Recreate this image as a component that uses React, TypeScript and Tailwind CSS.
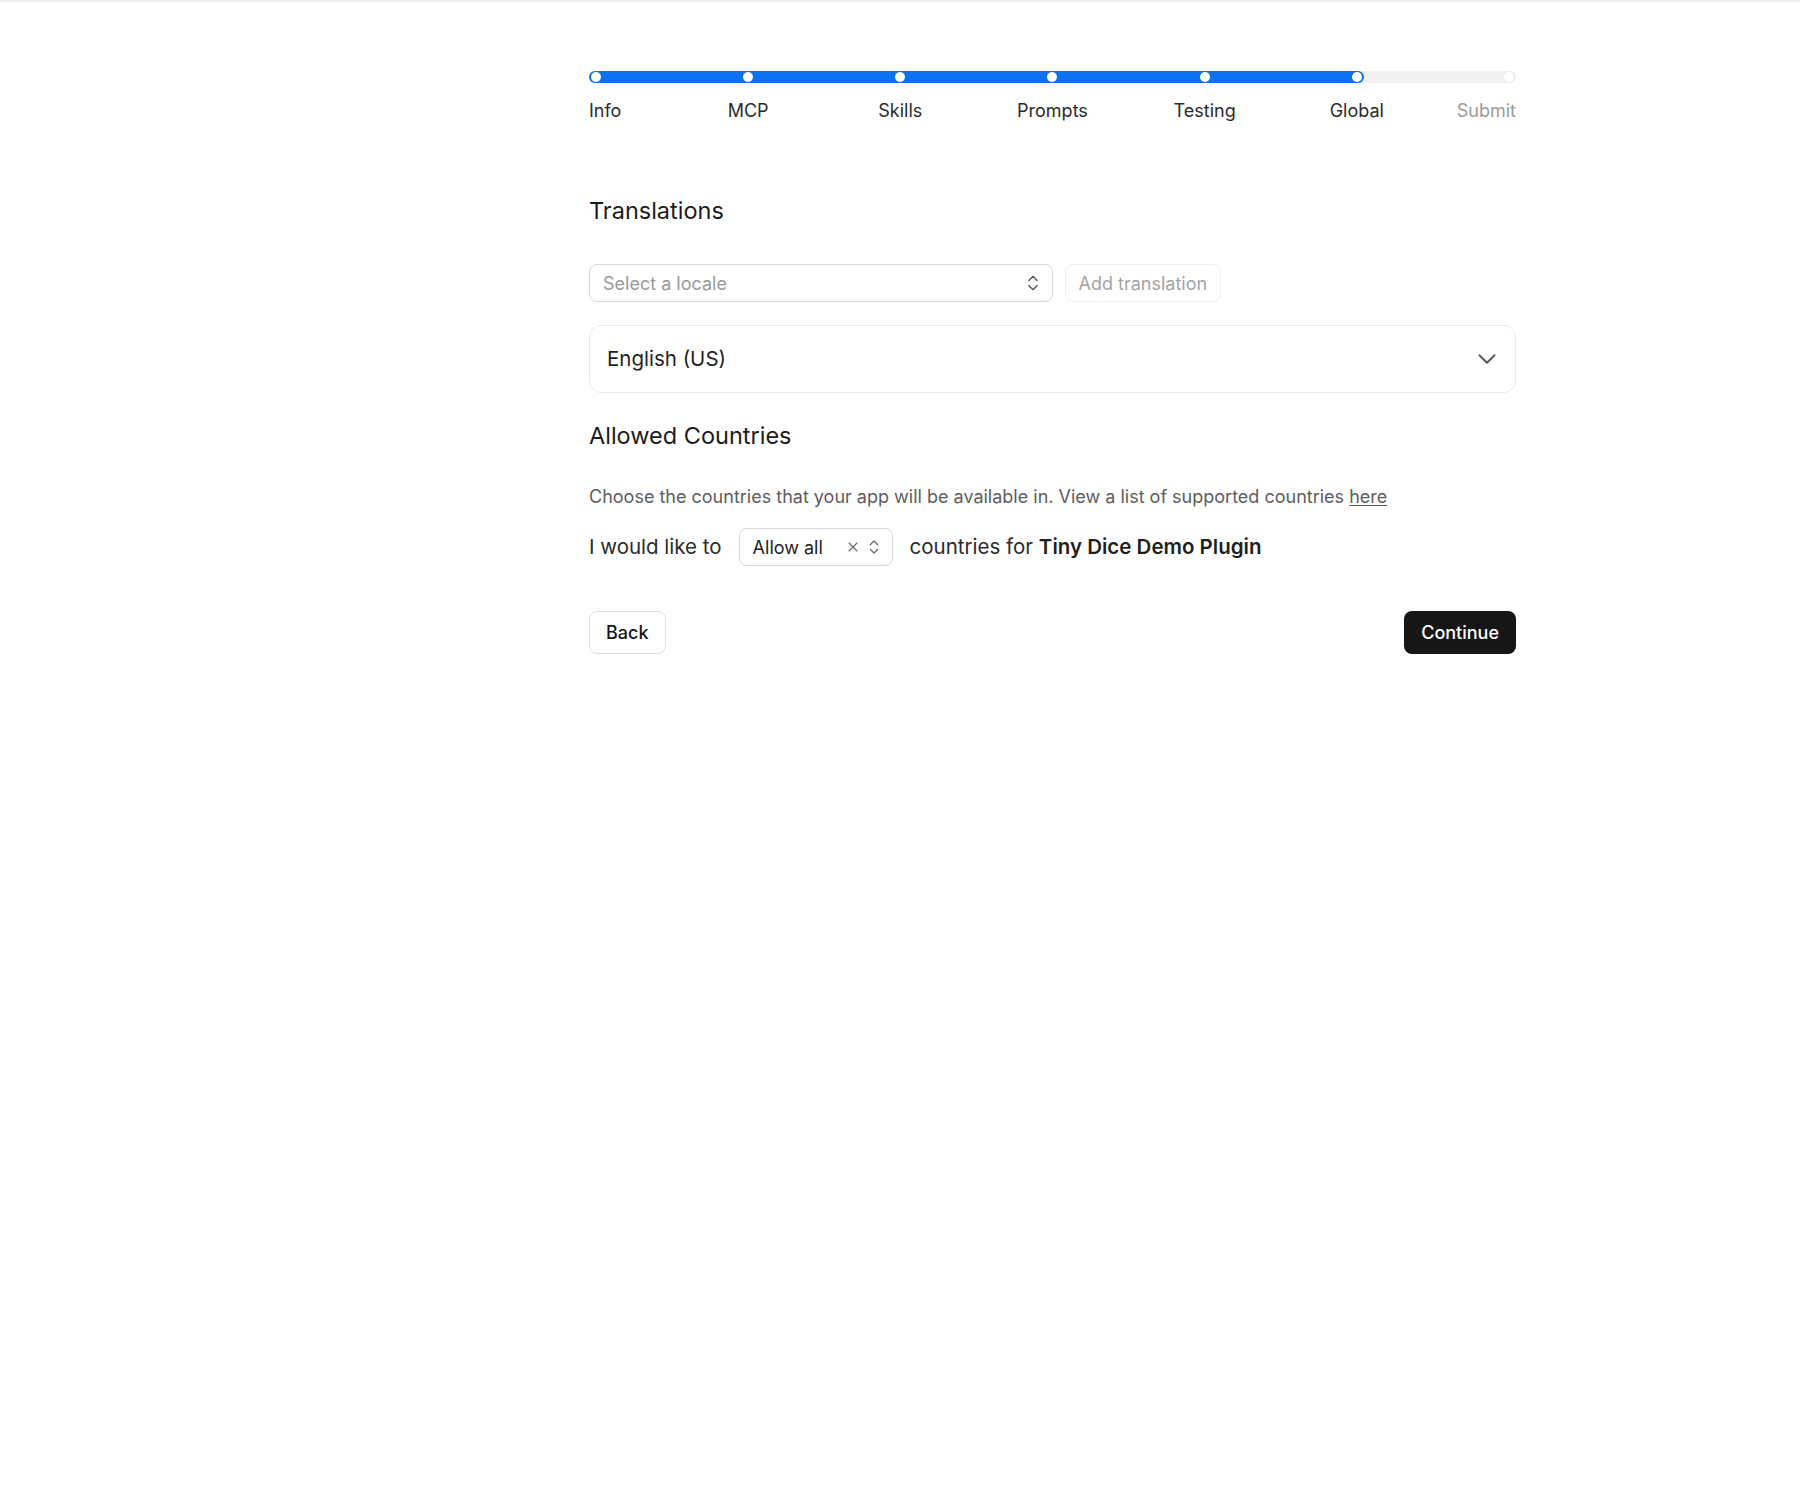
import React from 'react';
import { ChevronDown, ChevronsUpDown, X } from 'lucide-react';

const steps = ['Info', 'MCP', 'Skills', 'Prompts', 'Testing', 'Global', 'Submit'];
const current = 5;

const Stepper: React.FC = () => {
  // fill reaches the active dot plus the dot's own radius
  const fraction = current / (steps.length - 1);
  return (
    <div>
      <div className="relative h-3 rounded-full bg-[#f1f1f1]">
        <div
          className="absolute left-0 top-0 h-3 rounded-full bg-[#0d72f2]"
          style={{ width: `calc(${fraction * 100}% - ${fraction * 14}px + 14px)` }}
        />
        <div className="relative flex h-3 items-center justify-between px-[2px]">
          {steps.map((s, i) => (
            <span
              key={s}
              className={
                i <= current
                  ? 'h-2.5 w-2.5 rounded-full bg-white'
                  : 'h-2.5 w-2.5 rounded-full bg-white ring-1 ring-[#ececec]'
              }
            />
          ))}
        </div>
      </div>
      <div className="mt-4 flex justify-between">
        {steps.map((s, i) => (
          <div
            key={s}
            className={
              i === 0
                ? 'flex w-[14px] justify-start'
                : i === steps.length - 1
                ? 'flex w-[14px] justify-end'
                : 'flex w-[14px] justify-center'
            }
          >
            <span
              className={
                i <= current
                  ? 'whitespace-nowrap text-[18px] leading-6 text-[#2a2a2a]'
                  : 'whitespace-nowrap text-[18px] leading-6 text-[#9b9b9b]'
              }
            >
              {s}
            </span>
          </div>
        ))}
      </div>
    </div>
  );
};

export default function App() {
  return (
    <div
      className="flex min-h-screen w-full border-t-2 border-[#efefef] bg-white"
      style={{ fontFamily: 'Inter, "Noto Sans", sans-serif' }}
    >
      {/* empty nav column */}
      <aside className="w-[305px] shrink-0" />

      <main className="flex flex-1 justify-center pt-[69px]">
        <div className="w-[927px]">
          <Stepper />

          {/* Translations */}
          <h2 className="mt-[72px] text-[23.5px] leading-8 text-[#1b1b1b]">Translations</h2>

          <div className="mt-[37px] flex items-center gap-3">
            <button className="flex h-[38px] w-1/2 items-center justify-between rounded-lg border border-[#d9d9d9] pl-[13px] pr-[9px] text-[18px] text-[#9a9a9a]">
              <span>Select a locale</span>
              <ChevronsUpDown className="h-5 w-5 text-[#555]" strokeWidth={1.6} />
            </button>
            <button className="h-[38px] rounded-lg border border-[#efefef] px-[13px] text-[18px] text-[#a3a3a3]">
              Add translation
            </button>
          </div>

          <div className="mt-[23px] flex h-[68px] items-center justify-between rounded-xl border border-[#ececec] pl-[17px] pr-[13px]">
            <span className="text-[20.5px] text-[#1f1f1f]">English (US)</span>
            <ChevronDown className="h-[30px] w-[30px] text-[#5a5a5a]" strokeWidth={1.6} />
          </div>

          {/* Allowed Countries */}
          <h2 className="mt-[27px] text-[23.5px] leading-8 text-[#1b1b1b]">Allowed Countries</h2>

          <p className="mt-[33px] text-[18px] leading-6 text-[#5d5d5d]">
            Choose the countries that your app will be available in. View a list of supported countries{' '}
            <a className="underline underline-offset-2" href="#">
              here
            </a>
          </p>

          <div className="mt-[19px] flex items-center text-[20.5px] text-[#2b2b2b]">
            <span>I would like to</span>
            <button className="mx-[17px] flex h-[38px] w-[154px] items-center justify-between rounded-lg border border-[#d9d9d9] pl-[13px] pr-[9px] text-[18px] text-[#222]">
              <span>Allow all</span>
              <span className="flex items-center gap-[4px] text-[#666]">
                <X className="h-[16px] w-[16px]" strokeWidth={1.6} />
                <ChevronsUpDown className="h-[18px] w-[18px]" strokeWidth={1.6} />
              </span>
            </button>
            <span>
              countries for <span className="font-semibold text-[#1f1f1f]">Tiny Dice Demo Plugin</span>
            </span>
          </div>

          <div className="mt-[45px] flex items-center justify-between">
            <button className="h-[43px] rounded-lg border border-[#dedede] px-4 text-[18px] font-medium text-[#151515]">
              Back
            </button>
            <button className="h-[43px] rounded-lg bg-[#161616] px-[17px] text-[18px] font-medium text-white">
              Continue
            </button>
          </div>
        </div>
      </main>
    </div>
  );
}
